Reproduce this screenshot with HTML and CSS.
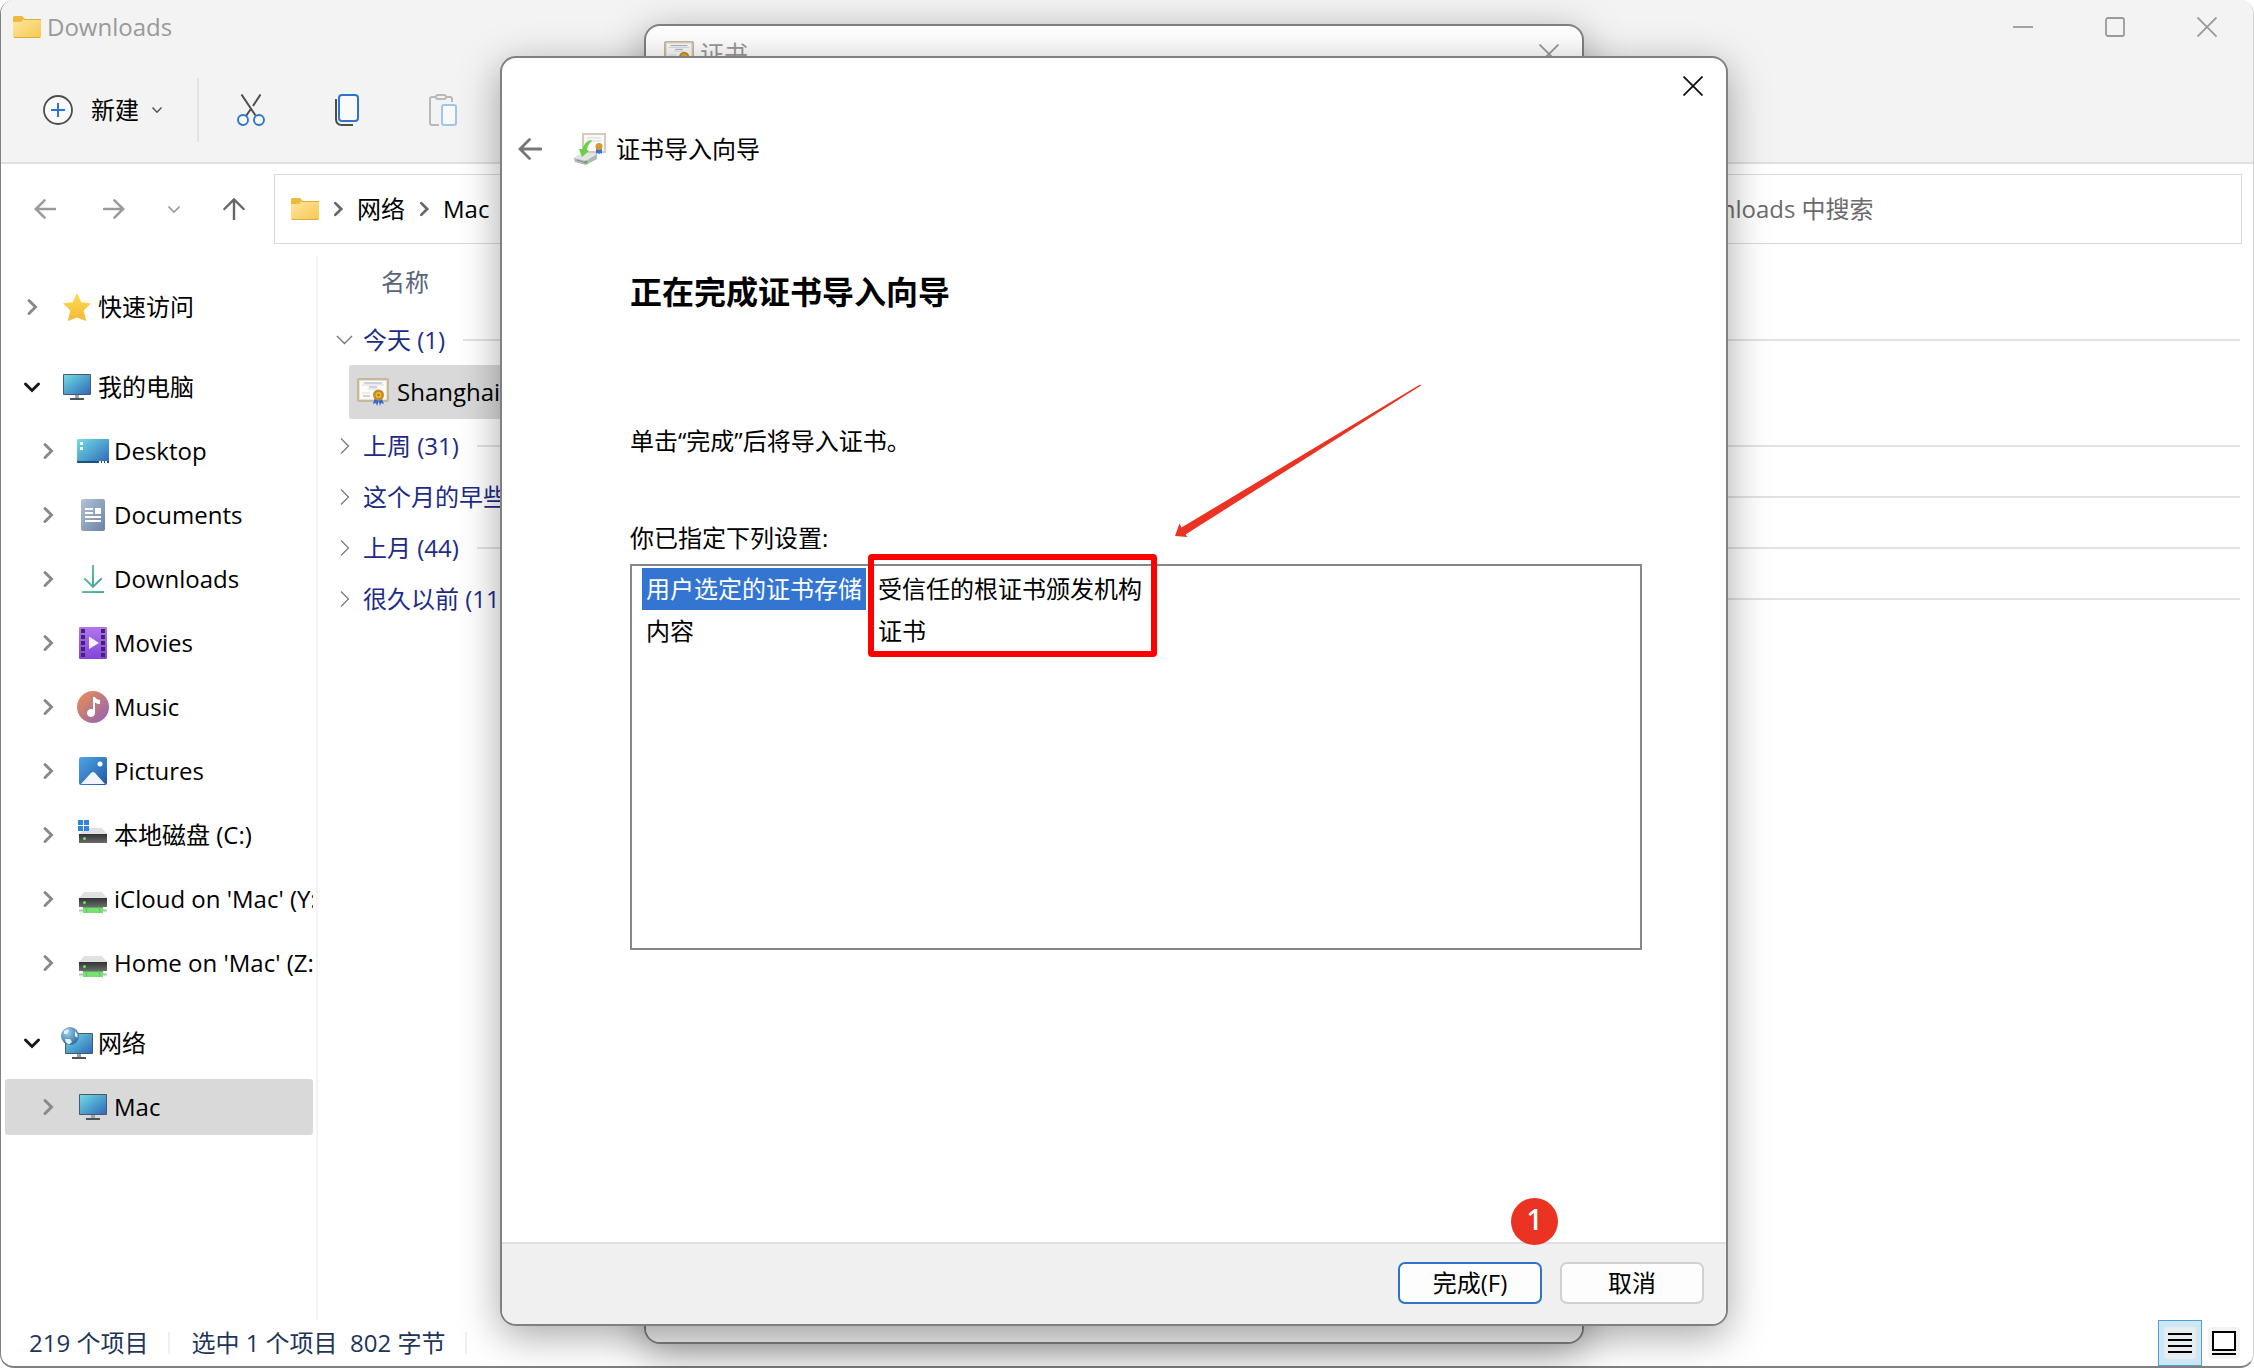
FILE: index.html
```html
<!DOCTYPE html>
<html lang="zh-CN">
<head>
<meta charset="utf-8">
<title>Downloads</title>
<link rel="stylesheet" href="styles.css">
</head>
<body>
<svg class="defs" width="0" height="0" aria-hidden="true">
  <defs>
    <linearGradient id="g-folder" x1="0" y1="0" x2="1" y2="1"><stop offset="0" stop-color="#ffe7a0"/><stop offset="1" stop-color="#f5c84f"/></linearGradient>
    <linearGradient id="g-screen" x1="0" y1="0" x2="1" y2="1"><stop offset="0" stop-color="#72dfe4"/><stop offset="1" stop-color="#2d67b8"/></linearGradient>
    <linearGradient id="g-star" x1="0" y1="0" x2="0" y2="1"><stop offset="0" stop-color="#fbdc4c"/><stop offset="1" stop-color="#f4b93a"/></linearGradient>
    <linearGradient id="g-doc" x1="0" y1="0" x2="1" y2="1"><stop offset="0" stop-color="#b3c2d8"/><stop offset="1" stop-color="#6a83a4"/></linearGradient>
    <linearGradient id="g-down" x1="0" y1="0" x2="1" y2="1"><stop offset="0" stop-color="#6fcf8e"/><stop offset="1" stop-color="#3f9aa8"/></linearGradient>
    <linearGradient id="g-movie" x1="0" y1="0" x2="0" y2="1"><stop offset="0" stop-color="#b076ee"/><stop offset="1" stop-color="#8444dc"/></linearGradient>
    <linearGradient id="g-music" x1="0" y1="0" x2="1" y2="1"><stop offset="0" stop-color="#ef9150"/><stop offset="1" stop-color="#8d61b8"/></linearGradient>
    <linearGradient id="g-pic" x1="0" y1="0" x2="1" y2="1"><stop offset="0" stop-color="#4ba5e6"/><stop offset="1" stop-color="#2458a8"/></linearGradient>
    <linearGradient id="g-drive" x1="0" y1="0" x2="0" y2="1"><stop offset="0" stop-color="#333"/><stop offset="1" stop-color="#6c6c6c"/></linearGradient>
    <radialGradient id="g-globe" cx=".35" cy=".3" r=".8"><stop offset="0" stop-color="#9fd0ec"/><stop offset="1" stop-color="#23639c"/></radialGradient>
    <symbol id="i-folder" viewBox="0 0 28 22"><path d="M0 1.500Q0 0 1.500 0H9L12 3V6H0Z" fill="#efb93f"/><path d="M0 6H8L11 3H27Q28 3 28 4V20.500Q28 22 26.500 22H1.500Q0 22 0 20.500Z" fill="url(#g-folder)"/><path d="M11 3.500H28M1 21.500H27" stroke="#e0ac3c"/></symbol>
    <symbol id="i-right" viewBox="0 0 22 22"><path d="M8 4.500 14.500 11 8 17.500" fill="none" stroke="currentColor" stroke-width="3" stroke-linecap="round"/></symbol>
    <symbol id="i-downbold" viewBox="0 0 22 22"><path d="M4.500 8 11 14.500 17.500 8" fill="none" stroke="currentColor" stroke-width="3" stroke-linecap="round"/></symbol>
    <symbol id="i-rightthin" viewBox="0 0 22 22"><path d="M7 3.500 14.500 11 7 18.500" fill="none" stroke="currentColor" stroke-width="1.200"/></symbol>
    <symbol id="i-downthin" viewBox="0 0 22 22"><path d="M3 7 10.500 14.500 18 7" fill="none" stroke="currentColor" stroke-width="1.400"/></symbol>
    <symbol id="i-close" viewBox="0 0 20 20"><path d="M0.500 0.500 19.500 19.500M19.500 0.500 0.500 19.500" fill="none" stroke="currentColor" stroke-width="1.800"/></symbol>
    <symbol id="i-back" viewBox="0 0 24 24"><path d="M23 12H2.500M11.500 2.500 2 12l9.500 9.500" fill="none" stroke="currentColor" stroke-width="2.800" stroke-linecap="round"/></symbol>
    <symbol id="i-monitor" viewBox="0 0 32 32"><path d="M2.500 3.500H29.500V23.500H2.500Z" fill="url(#g-screen)" stroke="#4b5a66"/><path d="M14 24h4v3h-4z" fill="#9aa3a8"/><path d="M9 27h14v2H9z" fill="#4c5458"/></symbol>
    <symbol id="i-netdrive" viewBox="0 0 32 32"><path d="M7 9H25L30 15H2Z" fill="#e0e1e4"/><path d="M2 15H30V24H2Z" fill="url(#g-drive)"/><circle cx="7.500" cy="19.500" r="1.500" fill="#62e858"/><path d="M2 27.500h28" stroke="#b8bcbe" stroke-width="2"/><path d="M6 24H26V30H6Z" fill="#78df74"/><path d="M6 24.500H26" stroke="#4bb74a"/><path d="M9.500 24v6M22.500 24v6" stroke="#5fc95d"/></symbol>
    <symbol id="i-cert" viewBox="0 0 32 28"><rect x="1" y="1" width="30" height="22" rx="1" fill="#fdfcf8" stroke="#c7b79e" stroke-width="2"/><rect x="2.500" y="2.500" width="27" height="19" fill="none" stroke="#e9dfcd"/><path d="M7 5h18M12 9h8" stroke="#9aa6c8"/><path d="M5 7h22M11 11h10M5 15h8" stroke="#d5d9e2"/><path d="M6 18h7" stroke="#a4a8b0"/><path d="M18 19l-2 7 3-1 1 3 3-8ZM24 19l3 7-3-1-1 3-2-8Z" fill="#3367d8"/><circle cx="21.500" cy="17" r="5.500" fill="#c58d1d"/><circle cx="21.500" cy="17" r="3" fill="#eab94a"/><circle cx="21.500" cy="17" r="1.300" fill="#a8730f"/></symbol>
  </defs>
</svg>

<div class="explorer">
  <header class="titlebar">
    <svg class="folder"><use href="#i-folder"/></svg>
    <span class="window-name">Downloads</span>
    <div class="window-controls">
      <button aria-label="最小化"><svg viewBox="0 0 20 20"><path d="M0 10H20" stroke="currentColor" stroke-width="1.800"/></svg></button>
      <button aria-label="最大化"><svg viewBox="0 0 20 20"><rect x="1" y="1" width="18" height="18" rx="2" fill="none" stroke="currentColor" stroke-width="1.800"/></svg></button>
      <button aria-label="关闭"><svg><use href="#i-close"/></svg></button>
    </div>
  </header>

  <div class="toolbar">
    <button class="new-button">
      <svg class="plus" viewBox="0 0 30 30"><circle cx="15" cy="15" r="14" fill="#fafafa" stroke="#4d4d4d" stroke-width="1.800"/><path d="M8 15H22M15 8V22" stroke="#2b75d0" stroke-width="2"/></svg>
      <span>新建</span>
      <svg class="tiny" viewBox="0 0 12 12"><path d="M1.500 3.500 6 8.200 10.500 3.500" fill="none" stroke="#555" stroke-width="1.500"/></svg>
    </button>
    <span class="rule"></span>
    <button class="tool" aria-label="剪切"><svg viewBox="0 0 32 32"><path d="M6.500 0.500 20.500 21.500M25.500 0.500 18 12M15.500 15.500 11 22" fill="none" stroke="#4d4d4d" stroke-width="2"/><circle cx="8" cy="26" r="5" fill="#fafafa" stroke="#2b75d0" stroke-width="1.900"/><circle cx="24" cy="26" r="5" fill="#fafafa" stroke="#2b75d0" stroke-width="1.900"/></svg></button>
    <button class="tool" aria-label="复制"><svg viewBox="0 0 32 32"><path d="M5 5V25Q5 31 11 31H22" fill="none" stroke="#4d4d4d" stroke-width="2"/><rect x="8" y="1" width="19" height="26" rx="3" fill="#fafafa" stroke="#2b75d0" stroke-width="2"/></svg></button>
    <button class="tool" aria-label="粘贴" disabled><svg viewBox="0 0 32 32"><path d="M9 3H5Q3 3 3 5V29Q3 31 5 31H12M19 3H23Q25 3 25 5V8" fill="none" stroke="#b9b9b9" stroke-width="2"/><rect x="9" y="1" width="10" height="4" rx="2" fill="#f3f3f3" stroke="#b9b9b9" stroke-width="2"/><rect x="15" y="11" width="14" height="20" rx="2" fill="#f8f8f8" stroke="#a0c6e6" stroke-width="2"/></svg></button>
  </div>

  <nav class="navbar">
    <div class="nav-buttons">
      <button aria-label="后退"><svg><use href="#i-back"/></svg></button>
      <button aria-label="前进"><svg viewBox="0 0 24 24"><path d="M1 12H21.500M12.500 2.500 22 12l-9.500 9.500" fill="none" stroke="currentColor" stroke-width="2.800" stroke-linecap="round"/></svg></button>
      <button class="recent" aria-label="最近位置"><svg viewBox="0 0 12 12"><path d="M0.500 3.500 6 9 11.500 3.500" fill="none" stroke="currentColor" stroke-width="1.600"/></svg></button>
      <button class="up" aria-label="上移"><svg viewBox="0 0 24 24"><path d="M12 24V1.500M1.500 12 12 1.500 22.500 12" fill="none" stroke="currentColor" stroke-width="2.600" stroke-linecap="round"/></svg></button>
    </div>
    <div class="address">
      <svg class="folder"><use href="#i-folder"/></svg>
      <svg class="crumb-arrow"><use href="#i-right"/></svg>
      <a href="#network">网络</a>
      <svg class="crumb-arrow"><use href="#i-right"/></svg>
      <a href="#mac">Mac</a>
    </div>
    <input class="search" type="text" aria-label="搜索" placeholder="在 Downloads 中搜索">
  </nav>

  <div class="content">
    <aside class="sidebar">
      <ul class="tree">
        <li><a href="#quick"><svg class="chev"><use href="#i-right"/></svg><svg class="icon" viewBox="0 0 32 32"><path d="M16 2l4.300 9.200 9.700 1.300-7.200 6.800 2.300 10.700L16 26.500 6.900 30l2.300-10.700L2 12.500l9.700-1.300Z" fill="url(#g-star)"/></svg><span>快速访问</span></a></li>
      </ul>
      <ul class="tree">
        <li><a href="#pc"><svg class="chev open"><use href="#i-downbold"/></svg><svg class="icon"><use href="#i-monitor"/></svg><span>我的电脑</span></a></li>
        <li class="child"><a href="#desktop"><svg class="chev"><use href="#i-right"/></svg><svg class="icon" viewBox="0 0 32 32"><rect y="4" width="32" height="24" rx="1" fill="url(#g-screen)"/><path d="M0 26H32V27Q32 28 31 28H1Q0 28 0 27Z" fill="#1d4f80"/><path d="M3 7h3v3H3zM3 12h3v3H3z" fill="#fff"/><path d="M22 27h2M25 27h2M28 27h2" stroke="#fff" stroke-width="2"/></svg><span>Desktop</span></a></li>
        <li class="child"><a href="#documents"><svg class="chev"><use href="#i-right"/></svg><svg class="icon" viewBox="0 0 32 32"><rect x="4" width="24" height="32" rx="2" fill="url(#g-doc)"/><path d="M8 10h8M8 14h8M8 18h16M8 22h16" stroke="#fff" stroke-width="2"/><path d="M18 9h6v6h-6z" fill="#fff"/></svg><span>Documents</span></a></li>
        <li class="child"><a href="#downloads"><svg class="chev"><use href="#i-right"/></svg><svg class="icon" viewBox="0 0 32 32"><path d="M15 2h2v19.500l7-7 1.400 1.400L16 25.300 6.600 15.900 8 14.500l7 7Z" fill="url(#g-down)"/><path d="M5 28h22v2H5z" fill="url(#g-down)"/></svg><span>Downloads</span></a></li>
        <li class="child"><a href="#movies"><svg class="chev"><use href="#i-right"/></svg><svg class="icon" viewBox="0 0 32 32"><rect x="2" width="28" height="32" rx="1" fill="url(#g-movie)"/><path d="M6 2V32M26 2V32" stroke="#43256e" stroke-width="4" stroke-dasharray="4 2"/><path d="M12 9.500 22 16 12 22Z" fill="#f7f2fd"/></svg><span>Movies</span></a></li>
        <li class="child"><a href="#music"><svg class="chev"><use href="#i-right"/></svg><svg class="icon" viewBox="0 0 32 32"><circle cx="16" cy="16" r="16" fill="url(#g-music)"/><path d="M16 6h2q1 2.500 5 3v4q-3 0-5-1.500V22a4 4 0 1 1-2-3.500Z" fill="#fff"/></svg><span>Music</span></a></li>
        <li class="child"><a href="#pictures"><svg class="chev"><use href="#i-right"/></svg><svg class="icon" viewBox="0 0 32 32"><rect x="2" y="2" width="28" height="28" rx="2" fill="url(#g-pic)"/><path d="M4 29 14 18q2-2 4 0L28 29Z" fill="#f1f6fc"/><circle cx="23" cy="9" r="2.500" fill="#fff"/></svg><span>Pictures</span></a></li>
        <li class="child"><a href="#c"><svg class="chev"><use href="#i-right"/></svg><svg class="icon" viewBox="0 0 32 32"><path d="M8 9H25L30 15H2Z" fill="#e0e1e4"/><path d="M2 15H30V24H2Z" fill="url(#g-drive)"/><circle cx="7.500" cy="19.500" r="1.500" fill="#62e858"/><path d="M1 1h5v5H1zM7 1h5v5H7zM1 7h5v5H1zM7 7h5v5H7z" fill="#2e86da"/></svg><span>本地磁盘 (C:)</span></a></li>
        <li class="child"><a href="#y"><svg class="chev"><use href="#i-right"/></svg><svg class="icon"><use href="#i-netdrive"/></svg><span>iCloud on 'Mac' (Y:)</span></a></li>
        <li class="child"><a href="#z"><svg class="chev"><use href="#i-right"/></svg><svg class="icon"><use href="#i-netdrive"/></svg><span>Home on 'Mac' (Z:)</span></a></li>
      </ul>
      <ul class="tree">
        <li><a href="#network"><svg class="chev open"><use href="#i-downbold"/></svg><svg class="icon" viewBox="0 0 32 32"><path d="M4.500 6.500H31.500V26.500H4.500Z" fill="url(#g-screen)" stroke="#4b5a66"/><path d="M16 27h4v3h-4z" fill="#9aa3a8"/><path d="M11 30h14v2H11z" fill="#4c5458"/><circle cx="9" cy="9" r="9" fill="url(#g-globe)"/><path d="M3 4l4-2 1 2-2 3-3 0ZM14 4l2.500 3 0 4-2.500-2ZM4 12l5 0 2 3-3 2.500-3-2Z" fill="#e3eff6"/></svg><span>网络</span></a></li>
        <li class="child"><a class="selected" href="#mac"><svg class="chev"><use href="#i-right"/></svg><svg class="icon"><use href="#i-monitor"/></svg><span>Mac</span></a></li>
      </ul>
    </aside>

    <main class="files">
      <div class="column-head">名称</div>
      <h2 class="group"><svg><use href="#i-downthin"/></svg>今天 (1)</h2>
      <a class="file" href="#cert"><svg><use href="#i-cert"/></svg>Shanghai</a>
      <h2 class="group"><svg><use href="#i-rightthin"/></svg>上周 (31)</h2>
      <h2 class="group"><svg><use href="#i-rightthin"/></svg>这个月的早些时候 (29)</h2>
      <h2 class="group"><svg><use href="#i-rightthin"/></svg>上月 (44)</h2>
      <h2 class="group"><svg><use href="#i-rightthin"/></svg>很久以前 (114)</h2>
    </main>
  </div>

  <footer class="status">
    <span class="stat">219 个项目</span>
    <span class="stat">选中 1 个项目&nbsp; 802 字节</span>
    <div class="views">
      <button class="active" aria-label="详细信息"><svg viewBox="0 0 32 32"><rect width="32" height="32" rx="4" fill="#e6edf0"/><path d="M4 7h24M4 13h24M4 19h24M4 25h24" stroke="#000" stroke-width="2"/></svg></button>
      <button aria-label="大图标"><svg viewBox="0 0 32 32"><rect width="32" height="32" rx="4" fill="#f3f3f3"/><rect x="5" y="5" width="22" height="18" fill="#fff" stroke="#000" stroke-width="2"/><path d="M4 27h24" stroke="#000" stroke-width="2"/></svg></button>
    </div>
  </footer>
</div>

<section class="dialog dialog-back" aria-label="证书">
  <header class="dialog-title">
    <svg class="cert"><use href="#i-cert"/></svg>
    <span>证书</span>
    <button class="close" aria-label="关闭"><svg><use href="#i-close"/></svg></button>
  </header>
  <div class="dialog-fill"></div>
</section>

<section class="dialog dialog-front" role="dialog" aria-label="证书导入向导">
  <header class="wizard-title"><button class="close" aria-label="关闭"><svg><use href="#i-close"/></svg></button></header>
  <div class="wizard-head">
    <button class="back" aria-label="上一步"><svg><use href="#i-back"/></svg></button>
    <svg class="wizard-icon" viewBox="0 0 32 32"><rect x="9" y="1" width="22" height="18" fill="#fafaf8" stroke="#d6cabc" stroke-width="2"/><path d="M13 5h14M13 8h14" stroke="#d3d8e0"/><path d="M0 25 10 19 23 21V26L12 32 1 29Z" fill="#b4b6b9"/><path d="M0 25 10 19 23 21 12 28Z" fill="#e3e4e6"/><path d="M3 27 12 30" stroke="#8c8f92"/><circle cx="12" cy="29" r="1.500" fill="#4db43c"/><path d="M22 16v5l2-1 1 1 0-5ZM25 16v5l2-1 1 1V16Z" fill="#3b6fe0"/><circle cx="25" cy="13.500" r="3.500" fill="#d69a2a"/><path d="M17 7Q10 9 8.500 16L5 16 8 24 15 18 13 17Q13 12 18 8Z" fill="#68d146"/></svg>
    <span>证书导入向导</span>
  </div>
  <div class="wizard-body">
    <h1>正在完成证书导入向导</h1>
    <p class="hint">单击“完成”后将导入证书。</p>
    <p class="label" id="settings-label">你已指定下列设置:</p>
    <div class="listbox">
      <table aria-labelledby="settings-label">
        <tr><td class="picked">用户选定的证书存储</td><td>受信任的根证书颁发机构</td></tr>
        <tr><td>内容</td><td>证书</td></tr>
      </table>
      <div class="mark-box"></div>
      <svg class="mark-arrow" viewBox="0 0 256 162"><path d="M250 4.500 11.500 147.500 9.500 143.500 5 156 17.500 157 15.500 154.500 251 5.500Z" fill="#ea3323"/></svg>
    </div>
  </div>
  <footer class="wizard-foot">
    <button class="action primary">完成(F)</button>
    <button class="action">取消</button>
    <span class="mark-badge">1</span>
  </footer>
</section>
</body>
</html>
```
FILE: styles.css
```css
* { box-sizing: border-box; }
html, body { height: 100%; }
body {
  margin: 0;
  position: relative;
  overflow: hidden;
  background: #fff;
  color: #000;
  font: 24px/32px "Open Sans", "Noto Sans CJK SC", sans-serif;
}
button, input { font: inherit; color: inherit; }
button {
  display: flex;
  align-items: center;
  justify-content: center;
  padding: 0;
  border: 0;
  background: none;
}
a { color: inherit; text-decoration: none; }
svg { display: block; flex: none; }
h1, h2, p, ul { margin: 0; padding: 0; font-weight: 400; }
ul { list-style: none; }
.defs { position: absolute; }

/* Explorer window */
.explorer {
  display: flex;
  flex-direction: column;
  height: 100%;
  overflow: hidden;
  border-left: 1px solid #808080;
  border-right: 1px solid #d0d0d0;
  border-bottom: 2px solid #808080;
  border-radius: 14px;
}
.titlebar {
  display: flex;
  align-items: center;
  gap: 6px;
  height: 54px;
  padding-left: 12px;
  background: #f3f3f3;
  color: #999;
}
.folder { width: 28px; height: 22px; }
.window-controls { display: flex; margin-left: auto; }
.window-controls button { width: 92px; height: 54px; }
.window-controls svg, .close svg { width: 20px; height: 20px; }

.toolbar {
  display: flex;
  align-items: center;
  height: 110px;
  padding-top: 3px;
  background: #f3f3f3;
  border-bottom: 2px solid #dfdfdf;
}
.new-button {
  justify-content: flex-start;
  gap: 18px;
  width: 196px;
  padding-left: 42px;
}
.new-button .plus { width: 30px; height: 30px; }
.new-button .tiny { width: 12px; height: 12px; margin-left: -6px; }
.rule { width: 2px; height: 64px; margin-right: 4px; background: #e3e3e3; }
.tool { width: 96px; height: 64px; }
.tool svg { width: 32px; height: 32px; }

.navbar {
  display: flex;
  height: 92px;
  padding: 10px 11px 12px 9px;
}
.nav-buttons {
  display: grid;
  grid-template-columns: 69px 69px 52px 68px;
  margin-right: 6px;
  color: #9a9a9a;
}
.nav-buttons svg { width: 22px; height: 22px; }
.nav-buttons .recent svg { width: 12px; height: 12px; }
.nav-buttons .up { color: #666; }
.address {
  flex: 1;
  display: flex;
  align-items: center;
  gap: 9px;
  margin-right: 12px;
  padding-left: 16px;
  border: 1px solid #d9d9d9;
}
.crumb-arrow { width: 20px; height: 20px; color: #666; }
.search {
  width: 640px;
  padding: 0 37px;
  border: 1px solid #d9d9d9;
  background: #fff;
}
.search::placeholder { color: #6b6b6b; opacity: 1; }

.content { flex: 1; display: flex; min-height: 0; }
.sidebar {
  width: 317px;
  padding: 23px 3px 0 4px;
  border-right: 2px solid #f3f3f3;
}
.tree { margin-bottom: 24px; }
.tree li + li { margin-top: 8px; }
.tree a {
  display: flex;
  align-items: center;
  height: 56px;
  padding-left: 16px;
  overflow: hidden;
  white-space: nowrap;
  border-radius: 3px;
}
.tree .child a { padding-left: 32px; }
.tree .selected { background: #d9d9d9; }
.chev { width: 22px; height: 22px; margin-right: 18px; color: #8a8a8a; }
.chev.open { color: #1a1a1a; }
.icon { width: 32px; height: 32px; margin-right: 5px; }

.files { flex: 1; padding-right: 13px; }
.column-head {
  height: 58px;
  padding: 10px 63px;
  color: #57647a;
}
.group {
  display: flex;
  align-items: center;
  height: 51px;
  padding-left: 16px;
  font-size: 24px;
  color: #1d2b86;
}
.group svg { width: 22px; height: 22px; margin-right: 7px; color: #777; }
.group::after {
  content: "";
  flex: 1;
  height: 2px;
  margin-left: 18px;
  background: #e2e2e2;
}
.file {
  display: flex;
  align-items: center;
  gap: 8px;
  width: 60%;
  height: 54px;
  margin: 0 0 1px 31px;
  padding-left: 8px;
  background: #d9d9d9;
  border-radius: 3px;
}
.file svg { width: 32px; height: 28px; }

.status {
  display: flex;
  align-items: center;
  height: 46px;
  padding: 0 7px;
  color: #1e3557;
}
.stat { padding: 0 20px 0 21px; line-height: 22px; border-right: 2px solid #f0f0f0; }
.views { display: flex; margin-left: auto; }
.views button { width: 44px; height: 46px; }
.views .active { background: #cfe6f4; border: 1px solid #4a9fda; }
.views svg { width: 32px; height: 32px; }

/* Dialog windows */
.dialog {
  position: absolute;
  display: flex;
  flex-direction: column;
  overflow: hidden;
  background: #fff;
  border: 2px solid #808080;
  border-radius: 16px;
  box-shadow: 0 10px 40px rgba(0, 0, 0, .35);
}
.dialog-back { inset: 24px 670px 24px 644px; }
.dialog-front { inset: 56px 526px 42px 500px; overflow: visible; }
.dialog-title {
  display: flex;
  align-items: center;
  gap: 6px;
  height: 56px;
  padding-left: 18px;
  color: #999;
}
.dialog-title .cert { width: 30px; height: 28px; }
.dialog-title .close { margin-left: auto; }
.close { width: 66px; height: 56px; }
.dialog-fill { flex: 1; background: #f0f0f0; }

.wizard-title { display: flex; justify-content: flex-end; height: 56px; color: #111; }
.wizard-head { display: flex; align-items: center; height: 70px; }
.back { width: 24px; height: 24px; margin: 0 32px 0 16px; color: #777; }
.back svg { width: 24px; height: 24px; }
.wizard-icon { width: 32px; height: 32px; margin-right: 10px; }
.wizard-body { flex: 1; padding: 88px 84px 0 128px; }
.wizard-body h1 { font-size: 32px; line-height: 40px; font-weight: 700; }
.hint { margin-top: 113px; }
.label { margin-top: 65px; }
.listbox {
  position: relative;
  height: 386px;
  margin-top: 10px;
  padding: 2px 10px;
  border: 2px solid #828790;
}
.listbox table { border-collapse: collapse; }
.listbox td { height: 42px; padding: 0 4px; }
.listbox td + td { padding-left: 12px; }
.listbox .picked { background: #3375d0; color: #fff; }
.mark-box {
  position: absolute;
  left: 236px;
  top: -12px;
  width: 289px;
  height: 103px;
  border: 6px solid #f00;
  border-radius: 4px;
}
.mark-arrow {
  position: absolute;
  left: 538px;
  top: -186px;
  width: 256px;
  height: 162px;
}
.wizard-foot {
  position: relative;
  display: flex;
  justify-content: flex-end;
  gap: 18px;
  padding: 18px 22px 20px;
  background: #f0f0f0;
  border-top: 2px solid #dfdfdf;
  border-radius: 0 0 14px 14px;
}
.action {
  width: 144px;
  height: 42px;
  background: #fdfdfd;
  border: 2px solid #d0d0d0;
  border-radius: 7px;
}
.action.primary { border-color: #2f72c8; }
.mark-badge {
  position: absolute;
  right: 168px;
  top: -46px;
  width: 47px;
  height: 47px;
  border-radius: 50%;
  background: #ea3323;
  color: #fff;
  font-size: 28px;
  line-height: 42px;
  font-weight: 600;
  text-align: center;
}
```
